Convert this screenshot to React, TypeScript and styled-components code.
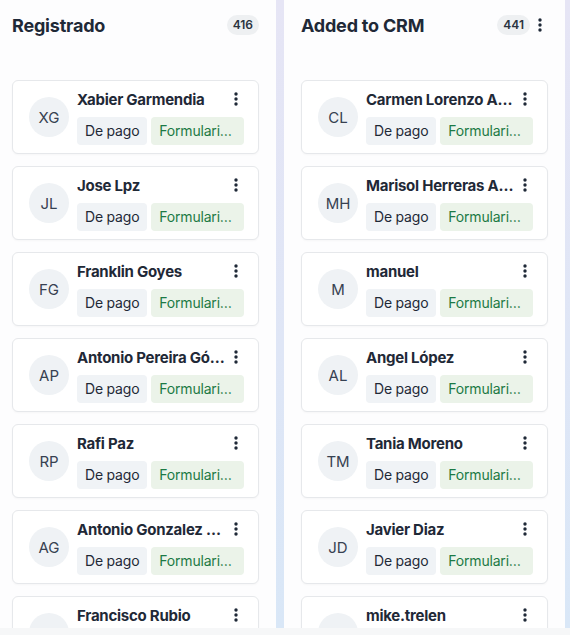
import styled, { createGlobalStyle } from "styled-components";

const GlobalStyle = createGlobalStyle`
  body {
    margin: 0;
    background: #f6f7f8;
    font-family: "Inter", "Noto Sans", sans-serif;
    color: #1f2937;
  }
`;

const Board = styled.div`
  display: flex;
  gap: 8px;
  height: 628px;
  margin-left: -5px;
  overflow: hidden;
  background: linear-gradient(180deg, #e6e5f5 0%, #dfe6f6 55%, #d9e7f7 100%);
`;

const Column = styled.section`
  width: 281px;
  flex-shrink: 0;
  padding: 0 17px;
  box-sizing: border-box;
  background: #fdfdfe;
`;

const Header = styled.header`
  display: flex;
  align-items: center;
  height: 50px;
  gap: 2px;
`;

const Title = styled.h2`
  flex: 1;
  margin: 0;
  font-size: 18px;
  font-weight: 700;
  color: #1f2937;
  letter-spacing: -0.2px;
`;

const Count = styled.span`
  font-size: 12px;
  font-weight: 600;
  color: #2b3440;
  background: #eef0f2;
  border-radius: 10px;
  padding: 2px 6px;
  line-height: 16px;
`;

const List = styled.ul`
  list-style: none;
  margin: 30px 0 0;
  padding: 0;
  display: flex;
  flex-direction: column;
  gap: 12px;
`;

const Card = styled.li`
  display: flex;
  align-items: center;
  gap: 8px;
  height: 74px;
  box-sizing: border-box;
  padding: 8px 14px 8px 16px;
  background: #fff;
  border: 1px solid #e6e8eb;
  border-radius: 6px;
  box-shadow: 0 1px 2px rgba(16, 24, 40, 0.03);
`;

const Avatar = styled.div`
  width: 40px;
  height: 40px;
  flex-shrink: 0;
  border-radius: 50%;
  background: #eff2f5;
  color: #374151;
  font-size: 15px;
  display: flex;
  align-items: center;
  justify-content: center;
`;

const Body = styled.div`
  flex: 1;
  min-width: 0;
  display: flex;
  flex-direction: column;
  gap: 8px;
`;

const NameRow = styled.div`
  display: flex;
  align-items: center;
  gap: 2px;
  height: 20px;
`;

const Name = styled.p`
  flex: 1;
  min-width: 0;
  margin: 0;
  font-size: 15px;
  font-weight: 700;
  letter-spacing: -0.25px;
  color: #1f2937;
  white-space: nowrap;
  overflow: hidden;
  text-overflow: ellipsis;
`;

const Tags = styled.div`
  display: flex;
  gap: 4px;
  min-width: 0;
`;

const Tag = styled.span<{ $tone: "grey" | "green" }>`
  height: 28px;
  line-height: 28px;
  padding: 0 8px;
  border-radius: 4px;
  font-size: 14px;
  letter-spacing: -0.2px;
  white-space: nowrap;
  overflow: hidden;
  text-overflow: ellipsis;
  flex-shrink: ${(p) => (p.$tone === "grey" ? 0 : 1)};
  min-width: 0;
  background: ${(p) => (p.$tone === "grey" ? "#f0f3f6" : "#ebf3e9")};
  color: ${(p) => (p.$tone === "grey" ? "#1f2937" : "#1c7a45")};
`;

const MenuButton = styled.button`
  width: 16px;
  height: 16px;
  padding: 0;
  border: none;
  background: transparent;
  display: flex;
  align-items: center;
  justify-content: center;
  flex-shrink: 0;
`;

const Kebab = () => (
  <MenuButton>
    <svg width="16" height="16" viewBox="0 0 16 16">
      <circle cx="8" cy="3" r="1.7" fill="#1f2937" />
      <circle cx="8" cy="8" r="1.7" fill="#1f2937" />
      <circle cx="8" cy="13" r="1.7" fill="#1f2937" />
    </svg>
  </MenuButton>
);

const initials = (name: string) =>
  name
    .split(/\s+/)
    .filter(Boolean)
    .slice(0, 2)
    .map((w) => w[0].toUpperCase())
    .join("");

const columns = [
  {
    title: "Registrado",
    count: 416,
    menu: false,
    leads: [
      "Xabier Garmendia",
      "Jose Lpz",
      "Franklin Goyes",
      "Antonio Pereira Gómez",
      "Rafi Paz",
      "Antonio Gonzalez Ruiz",
      "Francisco Rubio",
    ],
  },
  {
    title: "Added to CRM",
    count: 441,
    menu: true,
    leads: [
      "Carmen Lorenzo Alonso",
      "Marisol Herreras Alvarez",
      "manuel",
      "Angel López",
      "Tania Moreno",
      "Javier Diaz",
      "mike.trelen",
    ],
  },
];

export default function App() {
  return (
    <>
      <GlobalStyle />
      <Board>
        {columns.map((col) => (
          <Column key={col.title}>
            <Header>
              <Title>{col.title}</Title>
              <Count>{col.count}</Count>
              {col.menu && <Kebab />}
            </Header>
            <List>
              {col.leads.map((name) => (
                <Card key={name}>
                  <Avatar>{initials(name)}</Avatar>
                  <Body>
                    <NameRow>
                      <Name>{name}</Name>
                      <Kebab />
                    </NameRow>
                    <Tags>
                      <Tag $tone="grey">De pago</Tag>
                      <Tag $tone="green">Formulario web</Tag>
                    </Tags>
                  </Body>
                </Card>
              ))}
            </List>
          </Column>
        ))}
      </Board>
    </>
  );
}
